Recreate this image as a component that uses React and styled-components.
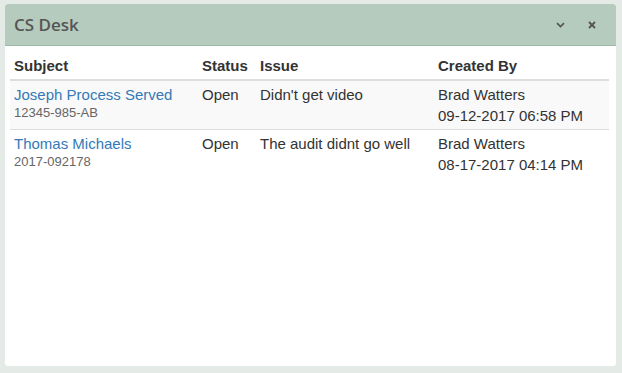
import React from "react";
import styled, { createGlobalStyle } from "styled-components";

const GlobalStyle = createGlobalStyle`
  html, body {
    margin: 0;
    padding: 0;
    background: #e4ebe7;
    font-family: "Liberation Sans", Arial, sans-serif;
  }
`;

const Page = styled.div`
  width: 622px;
  height: 373px;
  padding: 4px 6px 7px 5px;
  box-sizing: border-box;
`;

const Panel = styled.div`
  height: 100%;
  background: #fff;
  border-radius: 3px;
  overflow: hidden;
  display: flex;
  flex-direction: column;
`;

const PanelHeader = styled.div`
  height: 41px;
  flex: none;
  background: #b5cbbe;
  border-bottom: 1px solid #9db7a8;
  display: flex;
  align-items: center;
  padding: 0 20px 0 9px;
`;

const Title = styled.h3`
  margin: 0;
  flex: 1;
  font-family: "Open Sans", sans-serif;
  font-weight: 600;
  font-size: 17px;
  color: #555;
`;

const Tools = styled.div`
  display: flex;
  align-items: center;
  gap: 23px;
`;

const ToolButton = styled.span`
  display: flex;
  width: ${(p) => p.$w}px;
  height: 8px;
  color: #555;
`;

const Body = styled.div`
  padding: 6px 7px 0 5px;
`;

const Table = styled.table`
  width: 100%;
  border-collapse: collapse;
  table-layout: fixed;
  font-size: 15px;
  line-height: 21px;
  color: #333;
`;

const Th = styled.th`
  text-align: left;
  font-weight: 700;
  padding: 3px 4px;
  border-bottom: 2px solid #ddd;
`;

const Row = styled.tr`
  background: ${(p) => (p.$striped ? "#f9f9f9" : "#fff")};
  & + & {
    border-top: 1px solid #ddd;
  }
`;

const Td = styled.td`
  vertical-align: top;
  padding: 3px 4px;
`;

const SubjectLink = styled.a`
  display: block;
  color: #337ab7;
  text-decoration: none;
  cursor: pointer;
`;

const Ref = styled.div`
  font-size: 13px;
  line-height: 15px;
  color: #666;
`;

const tickets = [
  {
    subject: "Joseph Process Served",
    ref: "12345-985-AB",
    status: "Open",
    issue: "Didn't get video",
    by: "Brad Watters",
    date: "09-12-2017 06:58 PM",
  },
  {
    subject: "Thomas Michaels",
    ref: "2017-092178",
    status: "Open",
    issue: "The audit didnt go well",
    by: "Brad Watters",
    date: "08-17-2017 04:14 PM",
  },
];

const App = () => {
  return (
    <Page>
      <GlobalStyle />
      <Panel>
        <PanelHeader>
          <Title>CS Desk</Title>
          <Tools>
            <ToolButton $w={9}>
              <svg viewBox="0 0 9 8" width="9" height="8">
                <path d="M1 2.2 L4.5 5.6 L8 2.2" fill="none" stroke="currentColor" strokeWidth="1.7" />
              </svg>
            </ToolButton>
            <ToolButton $w={8}>
              <svg viewBox="0 0 8 8" width="8" height="8">
                <path d="M1 1 L7 7 M7 1 L1 7" fill="none" stroke="currentColor" strokeWidth="1.9" />
              </svg>
            </ToolButton>
          </Tools>
        </PanelHeader>
        <Body>
          <Table>
            <colgroup>
              <col style={{ width: 188 }} />
              <col style={{ width: 58 }} />
              <col style={{ width: 178 }} />
              <col />
            </colgroup>
            <thead>
              <tr>
                <Th>Subject</Th>
                <Th>Status</Th>
                <Th>Issue</Th>
                <Th>Created By</Th>
              </tr>
            </thead>
            <tbody>
              {tickets.map((t, i) => (
                <Row key={t.ref} $striped={i % 2 === 0}>
                  <Td>
                    <SubjectLink>{t.subject}</SubjectLink>
                    <Ref>{t.ref}</Ref>
                  </Td>
                  <Td>{t.status}</Td>
                  <Td>{t.issue}</Td>
                  <Td>
                    {t.by}
                    <br />
                    {t.date}
                  </Td>
                </Row>
              ))}
            </tbody>
          </Table>
        </Body>
      </Panel>
    </Page>
  );
};

export default App;
